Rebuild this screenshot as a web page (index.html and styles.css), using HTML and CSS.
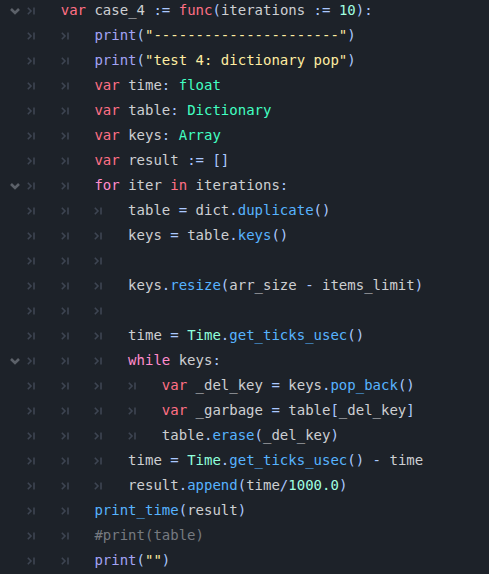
FILE: index.html
```html
<!DOCTYPE html>
<html>
<head>
<meta charset="utf-8">
<link rel="stylesheet" href="styles.css">
</head>
<body>
<div class="editor">
  <div class="line"><span class="gutter"><svg class="fold" width="27" height="25" viewBox="0 0 27 25"><polyline points="11,11 15,15 19,11"/></svg></span><span class="tab"><svg class="mk" width="9" height="8" viewBox="0 0 9 8"><polyline points="0.8,0.8 4,4 0.8,7.2"/><line x1="7" y1="0.5" x2="7" y2="7.5"/></svg></span><span class="code"><span class="kw">var</span> case_4 <span class="sy">:=</span> <span class="kw">func</span><span class="sy">(</span>iterations <span class="sy">:=</span> <span class="nu">10</span><span class="sy">):</span></span></div>

  <div class="line"><span class="gutter"></span><span class="tab"><svg class="mk" width="9" height="8" viewBox="0 0 9 8"><polyline points="0.8,0.8 4,4 0.8,7.2"/><line x1="7" y1="0.5" x2="7" y2="7.5"/></svg></span><span class="tab"><svg class="mk" width="9" height="8" viewBox="0 0 9 8"><polyline points="0.8,0.8 4,4 0.8,7.2"/><line x1="7" y1="0.5" x2="7" y2="7.5"/></svg></span><span class="code"><span class="gf">print</span><span class="sy">(</span><span class="st">"----------------------"</span><span class="sy">)</span></span></div>

  <div class="line"><span class="gutter"></span><span class="tab"><svg class="mk" width="9" height="8" viewBox="0 0 9 8"><polyline points="0.8,0.8 4,4 0.8,7.2"/><line x1="7" y1="0.5" x2="7" y2="7.5"/></svg></span><span class="tab"><svg class="mk" width="9" height="8" viewBox="0 0 9 8"><polyline points="0.8,0.8 4,4 0.8,7.2"/><line x1="7" y1="0.5" x2="7" y2="7.5"/></svg></span><span class="code"><span class="gf">print</span><span class="sy">(</span><span class="st">"test 4: dictionary pop"</span><span class="sy">)</span></span></div>

  <div class="line"><span class="gutter"></span><span class="tab"><svg class="mk" width="9" height="8" viewBox="0 0 9 8"><polyline points="0.8,0.8 4,4 0.8,7.2"/><line x1="7" y1="0.5" x2="7" y2="7.5"/></svg></span><span class="tab"><svg class="mk" width="9" height="8" viewBox="0 0 9 8"><polyline points="0.8,0.8 4,4 0.8,7.2"/><line x1="7" y1="0.5" x2="7" y2="7.5"/></svg></span><span class="code"><span class="kw">var</span> time<span class="sy">:</span> <span class="bt">float</span></span></div>

  <div class="line"><span class="gutter"></span><span class="tab"><svg class="mk" width="9" height="8" viewBox="0 0 9 8"><polyline points="0.8,0.8 4,4 0.8,7.2"/><line x1="7" y1="0.5" x2="7" y2="7.5"/></svg></span><span class="tab"><svg class="mk" width="9" height="8" viewBox="0 0 9 8"><polyline points="0.8,0.8 4,4 0.8,7.2"/><line x1="7" y1="0.5" x2="7" y2="7.5"/></svg></span><span class="code"><span class="kw">var</span> table<span class="sy">:</span> <span class="bt">Dictionary</span></span></div>

  <div class="line"><span class="gutter"></span><span class="tab"><svg class="mk" width="9" height="8" viewBox="0 0 9 8"><polyline points="0.8,0.8 4,4 0.8,7.2"/><line x1="7" y1="0.5" x2="7" y2="7.5"/></svg></span><span class="tab"><svg class="mk" width="9" height="8" viewBox="0 0 9 8"><polyline points="0.8,0.8 4,4 0.8,7.2"/><line x1="7" y1="0.5" x2="7" y2="7.5"/></svg></span><span class="code"><span class="kw">var</span> keys<span class="sy">:</span> <span class="bt">Array</span></span></div>

  <div class="line"><span class="gutter"></span><span class="tab"><svg class="mk" width="9" height="8" viewBox="0 0 9 8"><polyline points="0.8,0.8 4,4 0.8,7.2"/><line x1="7" y1="0.5" x2="7" y2="7.5"/></svg></span><span class="tab"><svg class="mk" width="9" height="8" viewBox="0 0 9 8"><polyline points="0.8,0.8 4,4 0.8,7.2"/><line x1="7" y1="0.5" x2="7" y2="7.5"/></svg></span><span class="code"><span class="kw">var</span> result <span class="sy">:=</span> <span class="sy">[]</span></span></div>

  <div class="line"><span class="gutter"><svg class="fold" width="27" height="25" viewBox="0 0 27 25"><polyline points="11,11 15,15 19,11"/></svg></span><span class="tab"><svg class="mk" width="9" height="8" viewBox="0 0 9 8"><polyline points="0.8,0.8 4,4 0.8,7.2"/><line x1="7" y1="0.5" x2="7" y2="7.5"/></svg></span><span class="tab"><svg class="mk" width="9" height="8" viewBox="0 0 9 8"><polyline points="0.8,0.8 4,4 0.8,7.2"/><line x1="7" y1="0.5" x2="7" y2="7.5"/></svg></span><span class="code"><span class="cf">for</span> iter <span class="kw">in</span> iterations<span class="sy">:</span></span></div>

  <div class="line"><span class="gutter"></span><span class="tab"><svg class="mk" width="9" height="8" viewBox="0 0 9 8"><polyline points="0.8,0.8 4,4 0.8,7.2"/><line x1="7" y1="0.5" x2="7" y2="7.5"/></svg></span><span class="tab"><svg class="mk" width="9" height="8" viewBox="0 0 9 8"><polyline points="0.8,0.8 4,4 0.8,7.2"/><line x1="7" y1="0.5" x2="7" y2="7.5"/></svg></span><span class="tab"><svg class="mk" width="9" height="8" viewBox="0 0 9 8"><polyline points="0.8,0.8 4,4 0.8,7.2"/><line x1="7" y1="0.5" x2="7" y2="7.5"/></svg></span><span class="code">table <span class="sy">=</span> dict<span class="sy">.</span><span class="fn">duplicate</span><span class="sy">()</span></span></div>

  <div class="line"><span class="gutter"></span><span class="tab"><svg class="mk" width="9" height="8" viewBox="0 0 9 8"><polyline points="0.8,0.8 4,4 0.8,7.2"/><line x1="7" y1="0.5" x2="7" y2="7.5"/></svg></span><span class="tab"><svg class="mk" width="9" height="8" viewBox="0 0 9 8"><polyline points="0.8,0.8 4,4 0.8,7.2"/><line x1="7" y1="0.5" x2="7" y2="7.5"/></svg></span><span class="tab"><svg class="mk" width="9" height="8" viewBox="0 0 9 8"><polyline points="0.8,0.8 4,4 0.8,7.2"/><line x1="7" y1="0.5" x2="7" y2="7.5"/></svg></span><span class="code">keys <span class="sy">=</span> table<span class="sy">.</span><span class="fn">keys</span><span class="sy">()</span></span></div>

  <div class="line"><span class="gutter"></span><span class="tab"><svg class="mk" width="9" height="8" viewBox="0 0 9 8"><polyline points="0.8,0.8 4,4 0.8,7.2"/><line x1="7" y1="0.5" x2="7" y2="7.5"/></svg></span><span class="tab"><svg class="mk" width="9" height="8" viewBox="0 0 9 8"><polyline points="0.8,0.8 4,4 0.8,7.2"/><line x1="7" y1="0.5" x2="7" y2="7.5"/></svg></span><span class="tab"><svg class="mk" width="9" height="8" viewBox="0 0 9 8"><polyline points="0.8,0.8 4,4 0.8,7.2"/><line x1="7" y1="0.5" x2="7" y2="7.5"/></svg></span><span class="code"></span></div>

  <div class="line"><span class="gutter"></span><span class="tab"><svg class="mk" width="9" height="8" viewBox="0 0 9 8"><polyline points="0.8,0.8 4,4 0.8,7.2"/><line x1="7" y1="0.5" x2="7" y2="7.5"/></svg></span><span class="tab"><svg class="mk" width="9" height="8" viewBox="0 0 9 8"><polyline points="0.8,0.8 4,4 0.8,7.2"/><line x1="7" y1="0.5" x2="7" y2="7.5"/></svg></span><span class="tab"><svg class="mk" width="9" height="8" viewBox="0 0 9 8"><polyline points="0.8,0.8 4,4 0.8,7.2"/><line x1="7" y1="0.5" x2="7" y2="7.5"/></svg></span><span class="code">keys<span class="sy">.</span><span class="fn">resize</span><span class="sy">(</span>arr_size <span class="sy">-</span> items_limit<span class="sy">)</span></span></div>

  <div class="line"><span class="gutter"></span><span class="tab"><svg class="mk" width="9" height="8" viewBox="0 0 9 8"><polyline points="0.8,0.8 4,4 0.8,7.2"/><line x1="7" y1="0.5" x2="7" y2="7.5"/></svg></span><span class="tab"><svg class="mk" width="9" height="8" viewBox="0 0 9 8"><polyline points="0.8,0.8 4,4 0.8,7.2"/><line x1="7" y1="0.5" x2="7" y2="7.5"/></svg></span><span class="tab"><svg class="mk" width="9" height="8" viewBox="0 0 9 8"><polyline points="0.8,0.8 4,4 0.8,7.2"/><line x1="7" y1="0.5" x2="7" y2="7.5"/></svg></span><span class="code"></span></div>

  <div class="line"><span class="gutter"></span><span class="tab"><svg class="mk" width="9" height="8" viewBox="0 0 9 8"><polyline points="0.8,0.8 4,4 0.8,7.2"/><line x1="7" y1="0.5" x2="7" y2="7.5"/></svg></span><span class="tab"><svg class="mk" width="9" height="8" viewBox="0 0 9 8"><polyline points="0.8,0.8 4,4 0.8,7.2"/><line x1="7" y1="0.5" x2="7" y2="7.5"/></svg></span><span class="tab"><svg class="mk" width="9" height="8" viewBox="0 0 9 8"><polyline points="0.8,0.8 4,4 0.8,7.2"/><line x1="7" y1="0.5" x2="7" y2="7.5"/></svg></span><span class="code">time <span class="sy">=</span> <span class="et">Time</span><span class="sy">.</span><span class="fn">get_ticks_usec</span><span class="sy">()</span></span></div>

  <div class="line"><span class="gutter"><svg class="fold" width="27" height="25" viewBox="0 0 27 25"><polyline points="11,11 15,15 19,11"/></svg></span><span class="tab"><svg class="mk" width="9" height="8" viewBox="0 0 9 8"><polyline points="0.8,0.8 4,4 0.8,7.2"/><line x1="7" y1="0.5" x2="7" y2="7.5"/></svg></span><span class="tab"><svg class="mk" width="9" height="8" viewBox="0 0 9 8"><polyline points="0.8,0.8 4,4 0.8,7.2"/><line x1="7" y1="0.5" x2="7" y2="7.5"/></svg></span><span class="tab"><svg class="mk" width="9" height="8" viewBox="0 0 9 8"><polyline points="0.8,0.8 4,4 0.8,7.2"/><line x1="7" y1="0.5" x2="7" y2="7.5"/></svg></span><span class="code"><span class="cf">while</span> keys<span class="sy">:</span></span></div>

  <div class="line"><span class="gutter"></span><span class="tab"><svg class="mk" width="9" height="8" viewBox="0 0 9 8"><polyline points="0.8,0.8 4,4 0.8,7.2"/><line x1="7" y1="0.5" x2="7" y2="7.5"/></svg></span><span class="tab"><svg class="mk" width="9" height="8" viewBox="0 0 9 8"><polyline points="0.8,0.8 4,4 0.8,7.2"/><line x1="7" y1="0.5" x2="7" y2="7.5"/></svg></span><span class="tab"><svg class="mk" width="9" height="8" viewBox="0 0 9 8"><polyline points="0.8,0.8 4,4 0.8,7.2"/><line x1="7" y1="0.5" x2="7" y2="7.5"/></svg></span><span class="tab"><svg class="mk" width="9" height="8" viewBox="0 0 9 8"><polyline points="0.8,0.8 4,4 0.8,7.2"/><line x1="7" y1="0.5" x2="7" y2="7.5"/></svg></span><span class="code"><span class="kw">var</span> _del_key <span class="sy">=</span> keys<span class="sy">.</span><span class="fn">pop_back</span><span class="sy">()</span></span></div>

  <div class="line"><span class="gutter"></span><span class="tab"><svg class="mk" width="9" height="8" viewBox="0 0 9 8"><polyline points="0.8,0.8 4,4 0.8,7.2"/><line x1="7" y1="0.5" x2="7" y2="7.5"/></svg></span><span class="tab"><svg class="mk" width="9" height="8" viewBox="0 0 9 8"><polyline points="0.8,0.8 4,4 0.8,7.2"/><line x1="7" y1="0.5" x2="7" y2="7.5"/></svg></span><span class="tab"><svg class="mk" width="9" height="8" viewBox="0 0 9 8"><polyline points="0.8,0.8 4,4 0.8,7.2"/><line x1="7" y1="0.5" x2="7" y2="7.5"/></svg></span><span class="tab"><svg class="mk" width="9" height="8" viewBox="0 0 9 8"><polyline points="0.8,0.8 4,4 0.8,7.2"/><line x1="7" y1="0.5" x2="7" y2="7.5"/></svg></span><span class="code"><span class="kw">var</span> _garbage <span class="sy">=</span> table<span class="sy">[</span>_del_key<span class="sy">]</span></span></div>

  <div class="line"><span class="gutter"></span><span class="tab"><svg class="mk" width="9" height="8" viewBox="0 0 9 8"><polyline points="0.8,0.8 4,4 0.8,7.2"/><line x1="7" y1="0.5" x2="7" y2="7.5"/></svg></span><span class="tab"><svg class="mk" width="9" height="8" viewBox="0 0 9 8"><polyline points="0.8,0.8 4,4 0.8,7.2"/><line x1="7" y1="0.5" x2="7" y2="7.5"/></svg></span><span class="tab"><svg class="mk" width="9" height="8" viewBox="0 0 9 8"><polyline points="0.8,0.8 4,4 0.8,7.2"/><line x1="7" y1="0.5" x2="7" y2="7.5"/></svg></span><span class="tab"><svg class="mk" width="9" height="8" viewBox="0 0 9 8"><polyline points="0.8,0.8 4,4 0.8,7.2"/><line x1="7" y1="0.5" x2="7" y2="7.5"/></svg></span><span class="code">table<span class="sy">.</span><span class="fn">erase</span><span class="sy">(</span>_del_key<span class="sy">)</span></span></div>

  <div class="line"><span class="gutter"></span><span class="tab"><svg class="mk" width="9" height="8" viewBox="0 0 9 8"><polyline points="0.8,0.8 4,4 0.8,7.2"/><line x1="7" y1="0.5" x2="7" y2="7.5"/></svg></span><span class="tab"><svg class="mk" width="9" height="8" viewBox="0 0 9 8"><polyline points="0.8,0.8 4,4 0.8,7.2"/><line x1="7" y1="0.5" x2="7" y2="7.5"/></svg></span><span class="tab"><svg class="mk" width="9" height="8" viewBox="0 0 9 8"><polyline points="0.8,0.8 4,4 0.8,7.2"/><line x1="7" y1="0.5" x2="7" y2="7.5"/></svg></span><span class="code">time <span class="sy">=</span> <span class="et">Time</span><span class="sy">.</span><span class="fn">get_ticks_usec</span><span class="sy">()</span> <span class="sy">-</span> time</span></div>

  <div class="line"><span class="gutter"></span><span class="tab"><svg class="mk" width="9" height="8" viewBox="0 0 9 8"><polyline points="0.8,0.8 4,4 0.8,7.2"/><line x1="7" y1="0.5" x2="7" y2="7.5"/></svg></span><span class="tab"><svg class="mk" width="9" height="8" viewBox="0 0 9 8"><polyline points="0.8,0.8 4,4 0.8,7.2"/><line x1="7" y1="0.5" x2="7" y2="7.5"/></svg></span><span class="tab"><svg class="mk" width="9" height="8" viewBox="0 0 9 8"><polyline points="0.8,0.8 4,4 0.8,7.2"/><line x1="7" y1="0.5" x2="7" y2="7.5"/></svg></span><span class="code">result<span class="sy">.</span><span class="fn">append</span><span class="sy">(</span>time<span class="sy">/</span><span class="nu">1000.0</span><span class="sy">)</span></span></div>

  <div class="line"><span class="gutter"></span><span class="tab"><svg class="mk" width="9" height="8" viewBox="0 0 9 8"><polyline points="0.8,0.8 4,4 0.8,7.2"/><line x1="7" y1="0.5" x2="7" y2="7.5"/></svg></span><span class="tab"><svg class="mk" width="9" height="8" viewBox="0 0 9 8"><polyline points="0.8,0.8 4,4 0.8,7.2"/><line x1="7" y1="0.5" x2="7" y2="7.5"/></svg></span><span class="code"><span class="fn">print_time</span><span class="sy">(</span>result<span class="sy">)</span></span></div>

  <div class="line"><span class="gutter"></span><span class="tab"><svg class="mk" width="9" height="8" viewBox="0 0 9 8"><polyline points="0.8,0.8 4,4 0.8,7.2"/><line x1="7" y1="0.5" x2="7" y2="7.5"/></svg></span><span class="tab"><svg class="mk" width="9" height="8" viewBox="0 0 9 8"><polyline points="0.8,0.8 4,4 0.8,7.2"/><line x1="7" y1="0.5" x2="7" y2="7.5"/></svg></span><span class="code"><span class="cm">#print(table)</span></span></div>

  <div class="line"><span class="gutter"></span><span class="tab"><svg class="mk" width="9" height="8" viewBox="0 0 9 8"><polyline points="0.8,0.8 4,4 0.8,7.2"/><line x1="7" y1="0.5" x2="7" y2="7.5"/></svg></span><span class="tab"><svg class="mk" width="9" height="8" viewBox="0 0 9 8"><polyline points="0.8,0.8 4,4 0.8,7.2"/><line x1="7" y1="0.5" x2="7" y2="7.5"/></svg></span><span class="code"><span class="gf">print</span><span class="sy">(</span><span class="st">""</span><span class="sy">)</span></span></div>
</div>
</body>
</html>
```

FILE: styles.css
```css
html, body {
  margin: 0;
  padding: 0;
  background: #1d2229;
  height: 100%;
  overflow: hidden;
}

.editor {
  margin-top: -2px;
  font-family: "DejaVu Sans Mono", "Liberation Mono", monospace;
  font-size: 14px;
  color: #cdcfd2;
}

.line {
  display: flex;
  align-items: center;
  height: 25px;
  line-height: 25px;
}

.gutter {
  flex: none;
  width: 27px;
  height: 25px;
}

.fold {
  display: block;
}

.fold polyline {
  fill: none;
  stroke: #5c6169;
  stroke-width: 2.6;
  stroke-linecap: butt;
  stroke-linejoin: miter;
}

.tab {
  flex: none;
  width: 4ch;
  height: 25px;
  display: flex;
  align-items: center;
}

.mk {
  display: block;
  margin-top: 1px;
}

.mk polyline,
.mk line {
  fill: none;
  stroke: #3e4552;
  stroke-width: 1.6;
}

.code {
  white-space: pre;
}

.kw { color: #ff7085; }
.cf { color: #ff8ccc; }
.bt { color: #42ffc2; }
.et { color: #8fffdb; }
.fn { color: #57b3ff; }
.gf { color: #a3a3f5; }
.nu { color: #a1ffe0; }
.st { color: #ffeda1; }
.sy { color: #abc9ff; }
.cm { color: #767a80; }
```
